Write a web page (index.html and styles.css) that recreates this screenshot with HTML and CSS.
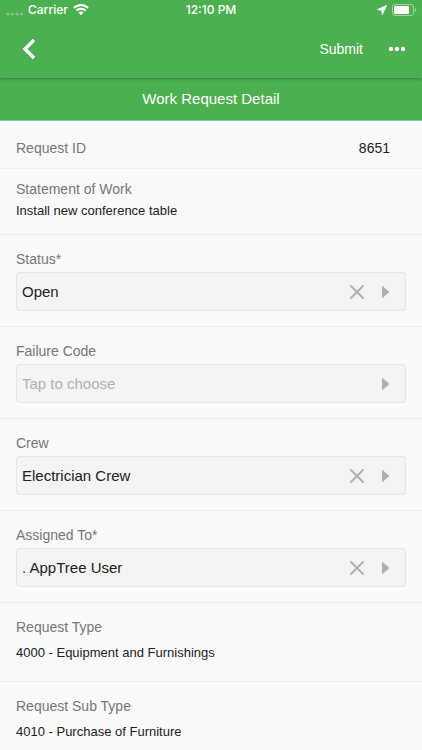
FILE: index.html
```html
<!DOCTYPE html>
<html lang="en">
<head>
    <meta charset="UTF-8">
    <meta name="viewport" content="width=device-width, initial-scale=1.0">
    <title>Work Request Detail</title>
    <link rel="stylesheet" href="styles.css">
</head>
<body>

    <header class="app-header">
        <div class="status-bar">
            <div class="status-left">
                <svg class="signal" width="18" height="4" viewBox="0 0 18 4"><circle cx="3" cy="2" r="1.600"/><circle cx="7.500" cy="2" r="1.600"/><circle cx="12" cy="2" r="1.600"/><circle cx="16.400" cy="2" r="1.600"/></svg>
                <span>Carrier</span>
                <svg width="16" height="12" viewBox="0 0 16 12" fill="#fff"><path d="M8 0C5 0 2.300 1.100.2 3.100l1.500 1.600C3.400 3.100 5.600 2.200 8 2.200s4.600.9 6.300 2.500l1.500-1.600C13.700 1.100 11 0 8 0z"/><path d="M8 3.700c-2 0-3.800.8-5.200 2.100l1.600 1.600C5.300 6.500 6.600 6 8 6s2.700.5 3.600 1.400l1.600-1.600C11.800 4.500 10 3.700 8 3.700z"/><path d="M8 7.400c-1 0-1.800.4-2.500 1L8 11.300l2.500-2.900c-.7-.6-1.500-1-2.500-1z"/></svg>
            </div>
            <span>12:10 PM</span>
            <div class="status-right">
                <svg width="10" height="10" viewBox="0 0 10 10"><path d="M9.500.5L.5 4.600l4.300.7.500 4.200z" fill="#fff" stroke="#fff" stroke-width=".9" stroke-linejoin="round"/></svg>
                <svg width="25" height="12" viewBox="0 0 25 12"><rect x=".5" y=".5" width="21" height="11" rx="2.500" fill="none" stroke="#a3d4a5"/><rect x="2" y="2" width="15" height="8" rx="1" fill="#fff"/><path d="M23 4v4c1.700-.6 1.700-3.400 0-4z" fill="#a3d4a5"/></svg>
            </div>
        </div>
        <nav class="toolbar">
            <button class="back" type="button" aria-label="Back">
                <svg width="14" height="22" viewBox="0 0 14 22"><path d="M12 2L3 11l9 9" fill="none" stroke="#fff" stroke-width="3.400"/></svg>
            </button>
            <button class="submit" type="submit" form="work-request">Submit</button>
            <button class="more" type="button" aria-label="More">
                <svg width="18" height="6" viewBox="0 0 18 6" fill="#fff"><circle cx="3" cy="3" r="2.200"/><circle cx="9" cy="3" r="2.200"/><circle cx="15" cy="3" r="2.200"/></svg>
            </button>
        </nav>
    </header>

    <h1 class="page-title">Work Request Detail</h1>

    <form class="details" id="work-request">
        <div class="row row-inline">
            <span class="label">Request ID</span>
            <span class="value">8651</span>
        </div>

        <div class="row row-compact">
            <span class="label">Statement of Work</span>
            <span class="value">Install new conference table</span>
        </div>

        <div class="row row-field">
            <label class="label" for="status">Status*</label>
            <div class="picker">
                <select id="status"><option>Open</option></select>
                <button class="clear" type="button" aria-label="Clear status">
                    <svg width="16" height="16" viewBox="0 0 16 16"><path d="M2 2l12 12M14 2L2 14"/></svg>
                </button>
                <svg class="arrow" width="8" height="14" viewBox="0 0 8 14"><path d="M0 .5L7.500 7 0 13.500z"/></svg>
            </div>
        </div>

        <div class="row row-field">
            <label class="label" for="failure-code">Failure Code</label>
            <div class="picker">
                <select class="empty" id="failure-code"><option value="">Tap to choose</option></select>
                <svg class="arrow" width="8" height="14" viewBox="0 0 8 14"><path d="M0 .5L7.500 7 0 13.500z"/></svg>
            </div>
        </div>

        <div class="row row-field">
            <label class="label" for="crew">Crew</label>
            <div class="picker">
                <select id="crew"><option>Electrician Crew</option></select>
                <button class="clear" type="button" aria-label="Clear crew">
                    <svg width="16" height="16" viewBox="0 0 16 16"><path d="M2 2l12 12M14 2L2 14"/></svg>
                </button>
                <svg class="arrow" width="8" height="14" viewBox="0 0 8 14"><path d="M0 .5L7.500 7 0 13.500z"/></svg>
            </div>
        </div>

        <div class="row row-field">
            <label class="label" for="assigned-to">Assigned To*</label>
            <div class="picker">
                <select id="assigned-to"><option>. AppTree User</option></select>
                <button class="clear" type="button" aria-label="Clear assigned user">
                    <svg width="16" height="16" viewBox="0 0 16 16"><path d="M2 2l12 12M14 2L2 14"/></svg>
                </button>
                <svg class="arrow" width="8" height="14" viewBox="0 0 8 14"><path d="M0 .5L7.500 7 0 13.500z"/></svg>
            </div>
        </div>

        <div class="row">
            <span class="label">Request Type</span>
            <span class="value">4000 - Equipment and Furnishings</span>
        </div>

        <div class="row last">
            <span class="label">Request Sub Type</span>
            <span class="value">4010 - Purchase of Furniture</span>
        </div>
    </form>

</body>
</html>
```

FILE: styles.css
```css
* {
    box-sizing: border-box;
}

body {
    margin: 0;
    background-color: #fafafa;
    font-family: 'Liberation Sans', Arial, sans-serif;
    font-size: 14px;
    line-height: 18px;
    color: #222;
}

svg {
    display: block;
}

button {
    padding: 0;
    border: 0;
    background: none;
    color: inherit;
    font: inherit;
    cursor: pointer;
}

.app-header {
    position: relative;
    background-color: #4caf50;
    color: #fff;
    box-shadow: 0 1px 3px rgba(0, 0, 0, 0.3);
}

.status-bar {
    display: grid;
    grid-template-columns: 1fr auto 1fr;
    align-items: center;
    height: 20px;
    padding: 0 5px;
    font-family: 'Inter', 'Liberation Sans', sans-serif;
    font-size: 12px;
    font-weight: 500;
}

.status-left,
.status-right {
    display: flex;
    align-items: center;
    gap: 5px;
}

.status-right {
    justify-content: flex-end;
}

.signal {
    fill: #82c785;
    margin-top: 8px;
}

.toolbar {
    display: flex;
    align-items: center;
    height: 58px;
    padding: 0 16px 0 22px;
}

.submit {
    margin-left: auto;
    margin-right: 25px;
}

.page-title {
    margin: 0;
    padding: 12px;
    background-color: #4caf50;
    border-bottom: 1px solid #8fcb92;
    color: #fff;
    font-size: 15px;
    font-weight: 400;
    line-height: 18px;
    text-align: center;
}

.row {
    display: flex;
    flex-direction: column;
    gap: 8px;
    padding: 15px 16px 19px;
    border-bottom: 1px solid #ebebeb;
}

.row.last {
    border-bottom: 0;
}

.row-inline {
    flex-direction: row;
    justify-content: space-between;
    padding: 18px 32px 11px 16px;
}

.row-compact {
    gap: 4px;
    padding: 11px 16px 14px;
}

.row-field {
    gap: 4px;
    padding: 15px 16px;
}

.label {
    color: #777;
}

.value {
    font-size: 13px;
}

.row-inline .value {
    font-size: 14px;
}

.picker {
    display: flex;
    align-items: center;
    height: 39px;
    padding-right: 15px;
    background-color: #f4f4f4;
    border: 1px solid #e6e6e6;
    border-radius: 3px;
}

.picker select {
    flex: 1;
    min-width: 0;
    height: 100%;
    padding: 0 5px;
    appearance: none;
    border: 0;
    background: none;
    color: #222;
    font: inherit;
    font-size: 15px;
}

.picker select.empty {
    color: #b0b0b0;
}

.clear {
    margin-right: 17px;
}

.clear path {
    fill: none;
    stroke: #b0b0b0;
    stroke-width: 2;
    stroke-linecap: round;
}

.arrow {
    fill: #b0b0b0;
}
```
